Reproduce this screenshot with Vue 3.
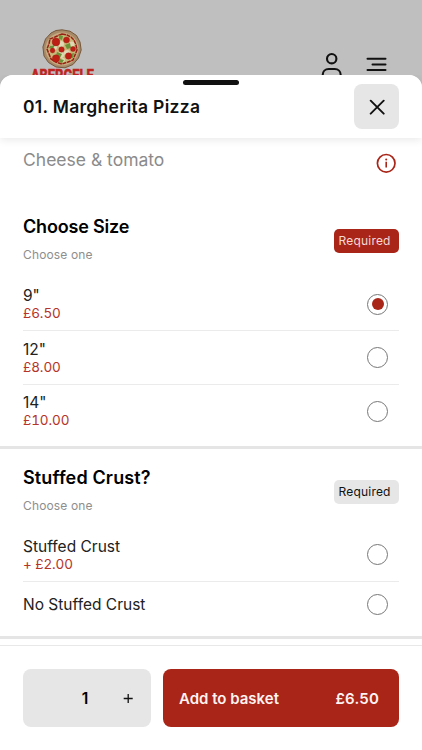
<script setup>
import { ref } from 'vue'

const groups = ref([
  {
    title: 'Choose Size',
    cls: 'size',
    chosen: 0,
    options: [
      { name: '9"', price: '£6.50' },
      { name: '12"', price: '£8.00' },
      { name: '14"', price: '£10.00' },
    ],
  },
  {
    title: 'Stuffed Crust?',
    cls: 'crust',
    chosen: null,
    options: [{ name: 'Stuffed Crust', price: '+ £2.00' }, { name: 'No Stuffed Crust' }],
  },
])
const quantity = ref(1)
</script>

<template>
  <div class="screen">
    <div class="backdrop">
      <div class="brand">
        <svg class="pizza" width="40" height="40" viewBox="0 0 40 40">
          <path d="M20 .8 28 2.2 34.500 6.500 38 13 39.200 21 36.500 29 31 35.500 23 38.800 14 38 6.500 33.500 2 27 .9 18 3.500 10 9 4 14 1.500Z" fill="#a78a67" stroke="#76583c" stroke-width="1" />
          <circle cx="20" cy="20" r="16.500" fill="#c6aa80" />
          <path d="M20 5 25 6 29 8 32 11 34 16 35 21 33 26 31 31 26 33 20 35 14 33 9 30 7 25 5 20 7 15 8 10 13 8Z" fill="#c9b679" stroke="#971f13" stroke-width="1.500" stroke-dasharray="4 .7" />
          <g fill="#e0d8b4">
            <circle cx="19" cy="15" r="3" /><circle cx="12" cy="18" r="3" /><circle cx="25" cy="24" r="3" />
            <circle cx="19" cy="26" r="3" /><circle cx="30" cy="15" r="2.500" /><circle cx="21" cy="31" r="2" />
          </g>
          <g fill="#6c9238">
            <path d="m17 6 4 1-1 4-3-1ZM8 17l5-1-2 4-4-1ZM23 16l5-2 1 5-4 1ZM15 23l5 2-2 4-4-2ZM28 25l4-1-1 5-4-1ZM18 30l4 1-2 3-3-1Z" />
          </g>
          <g fill="#bd1f15" stroke="#981d12" stroke-width=".4">
            <circle cx="14" cy="13" r="3.900" /><circle cx="24.500" cy="11" r="3" />
            <circle cx="31" cy="20" r="2.500" /><circle cx="19.500" cy="20.500" r="2.700" />
            <circle cx="10.500" cy="21.500" r="2.400" /><circle cx="26.500" cy="27" r="3.200" />
            <circle cx="14" cy="29.500" r="3.700" />
          </g>
        </svg>
        <div class="brand-name">ABERGELE</div>
      </div>
      <svg class="user" width="22" height="28" viewBox="0 0 22 28" fill="none" stroke="#111" stroke-width="2.100">
        <circle cx="10.700" cy="6.700" r="4.700" />
        <path d="M1.700 26v-3c0-3.500 2.500-6 6-6h6c3.500 0 6 2.500 6 6v3" />
      </svg>
      <svg class="menu" width="21" height="16" viewBox="0 0 21 16" stroke="#111" stroke-width="2" stroke-linecap="round">
        <path d="M1.500 1.700h18M6.500 7.400h13M1.500 13h18" />
      </svg>
    </div>

    <main class="sheet">
      <header class="top">
        <span class="grabber"></span>
        <h1>01. Margherita Pizza</h1>
        <button class="close" aria-label="Close">
          <svg width="16" height="16" viewBox="0 0 16 16" stroke="#111" stroke-width="1.900" stroke-linecap="round">
            <path d="m1.700 1.700 13 13m0-13-13 13" />
          </svg>
        </button>
      </header>

      <div class="intro">
        <p>Cheese &amp; tomato</p>
        <svg width="20" height="20" viewBox="0 0 20 20" fill="none" stroke="#a92518">
          <circle cx="10.200" cy="10.300" r="8.800" stroke-width="1.700" />
          <path d="M10.200 8.800v5.700" stroke-width="1.600" />
          <circle cx="10.200" cy="6.600" r="1" fill="#a92518" stroke="none" />
        </svg>
      </div>

      <section v-for="g in groups" :key="g.title" :class="['group', g.cls]">
        <div class="group-head">
          <div>
            <h2>{{ g.title }}</h2>
            <p class="hint">Choose one</p>
          </div>
          <span :class="['badge', { active: g.chosen !== null }]">Required</span>
        </div>
        <ul>
          <li v-for="(o, i) in g.options" :key="o.name" :class="{ short: !o.price }" @click="g.chosen = i">
            <div class="option">
              <div class="name">{{ o.name }}</div>
              <div v-if="o.price" class="price">{{ o.price }}</div>
            </div>
            <span :class="['radio', { on: g.chosen === i }]"></span>
          </li>
        </ul>
      </section>

      <footer>
        <div class="qty">
          <span class="count">{{ quantity }}</span>
          <button class="plus" aria-label="Increase" @click="quantity++">
            <svg width="10" height="10" viewBox="0 0 10 10" stroke="#111" stroke-width="1.300">
              <path d="M.7 5.500h9M5.200 1v9" />
            </svg>
          </button>
        </div>
        <button class="add"><span class="add-label">Add to basket</span><span class="total">£6.50</span></button>
      </footer>
    </main>
  </div>
</template>

<style>
body {
  margin: 0;
  background: #fff;
}
</style>

<style scoped>
* {
  box-sizing: border-box;
}
.screen {
  width: 422px;
  height: 750px;
  overflow: hidden;
  display: flex;
  flex-direction: column;
  background: #bfbfbf;
  font-family: Inter, "Liberation Sans", sans-serif;
  color: #111;
}
h1, h2, p, ul {
  margin: 0;
  padding: 0;
}
button {
  border: 0;
  padding: 0;
  font-family: inherit;
}
.backdrop {
  height: 75px;
  flex: none;
  display: flex;
  align-items: flex-start;
}
.brand {
  width: 66px;
  margin: 29px 226px 0 29px;
  display: flex;
  flex-direction: column;
  align-items: center;
}
.brand-name {
  margin-top: -4px;
  font: 700 17px/20px Roboto, sans-serif;
  transform: scaleX(0.76);
  color: #bd2420;
  -webkit-text-stroke: 0.7px #bd2420;
}
.user {
  margin-top: 52px;
}
.menu {
  margin: 57px 0 0 23px;
}
.sheet {
  position: relative;
  flex: 1;
  background: #fff;
  border-radius: 13px 13px 0 0;
  display: flex;
  flex-direction: column;
}
.top {
  position: relative;
  height: 63px;
  flex: none;
  padding: 0 23px;
  display: flex;
  align-items: center;
  justify-content: space-between;
  border-radius: 13px 13px 0 0;
  background: #fff;
  box-shadow: 0 2px 9px rgba(0, 0, 0, 0.09);
  clip-path: inset(0 0 -14px 0);
}
.grabber {
  position: absolute;
  top: 5px;
  left: 183px;
  width: 56px;
  height: 5px;
  border-radius: 3px;
  background: #111;
}
h1 {
  font-size: 17.5px;
  font-weight: 600;
  line-height: 24px;
  letter-spacing: 0.29px;
}
.close {
  width: 45px;
  height: 45px;
  border-radius: 8px;
  background: #e6e6e6;
  display: grid;
  place-items: center;
}
.intro {
  height: 61px;
  flex: none;
  padding: 10px 26px 0 23px;
  display: flex;
  justify-content: space-between;
}
.intro p {
  font-size: 17.5px;
  line-height: 24px;
  color: #8b8b8b;
}
.intro svg {
  margin-top: 5px;
}
.group {
  flex: none;
  padding: 0 23px;
  border-bottom: 3px solid #e5e5e5;
}
.size {
  height: 250px;
}
.crust {
  height: 189.5px;
}
.group-head {
  height: 79px;
  display: flex;
  justify-content: space-between;
  padding-top: 16px;
}
.crust .group-head {
  height: 79.6px;
  padding-top: 16.6px;
}
h2 {
  font-size: 18px;
  font-weight: 600;
  line-height: 24px;
  color: #000;
  letter-spacing: -0.18px;
}
.crust h2 {
  letter-spacing: 0.14px;
}
.hint {
  margin-top: 7px;
  font-size: 12px;
  line-height: 18px;
  letter-spacing: 0.15px;
  color: #8e8e8e;
}
.badge {
  width: 65px;
  height: 24px;
  margin-top: 14px;
  padding-left: 4.5px;
  border-radius: 5px;
  background: #e6e6e6;
  font-size: 12px;
  line-height: 24px;
  letter-spacing: 0.2px;
}
.badge.active {
  background: #a92518;
  color: #f5d9d4;
}
ul {
  list-style: none;
}
li {
  height: 53.4px;
  display: flex;
  align-items: center;
  justify-content: space-between;
  border-bottom: 1.5px solid #ebebeb;
  padding-right: 11px;
}
li:last-child {
  border-bottom: 0;
}
li.short {
  height: 45px;
}
.option {
  padding-top: 1px;
}
.name {
  font-size: 15.5px;
  line-height: 18px;
  color: #222;
}
.price {
  font-size: 13.5px;
  line-height: 17px;
  letter-spacing: -0.08px;
  font-variant-numeric: tabular-nums;
  color: #b5342a;
}
.radio {
  width: 21px;
  height: 21px;
  border: 1px solid #777;
  border-radius: 50%;
  display: grid;
  place-items: center;
}
.radio.on::after {
  content: "";
  width: 12px;
  height: 12px;
  border-radius: 50%;
  background: #a92518;
}
footer {
  margin-top: 6.5px;
  border-top: 1px solid #e8e8e8;
  padding: 23px 23px 0;
  display: flex;
  gap: 12px;
}
.qty {
  width: 128px;
  height: 58px;
  border-radius: 8px;
  background: #e6e6e6;
  display: flex;
  align-items: center;
  justify-content: flex-end;
  padding-right: 18px;
}
.count {
  width: 12px;
  text-align: center;
  font-size: 15.5px;
  font-weight: 600;
  margin-right: 32px;
  color: #000;
}
.plus {
  width: 10px;
  height: 10px;
  display: flex;
  background: none;
}
.add {
  flex: 1;
  height: 58px;
  border-radius: 8px;
  background: #a92518;
  color: #fdf3f1;
  padding: 0 20px 0 16px;
  display: flex;
  align-items: center;
  justify-content: space-between;
  font-size: 15px;
  font-weight: 600;
}
.total {
  letter-spacing: 0.2px;
}
</style>
